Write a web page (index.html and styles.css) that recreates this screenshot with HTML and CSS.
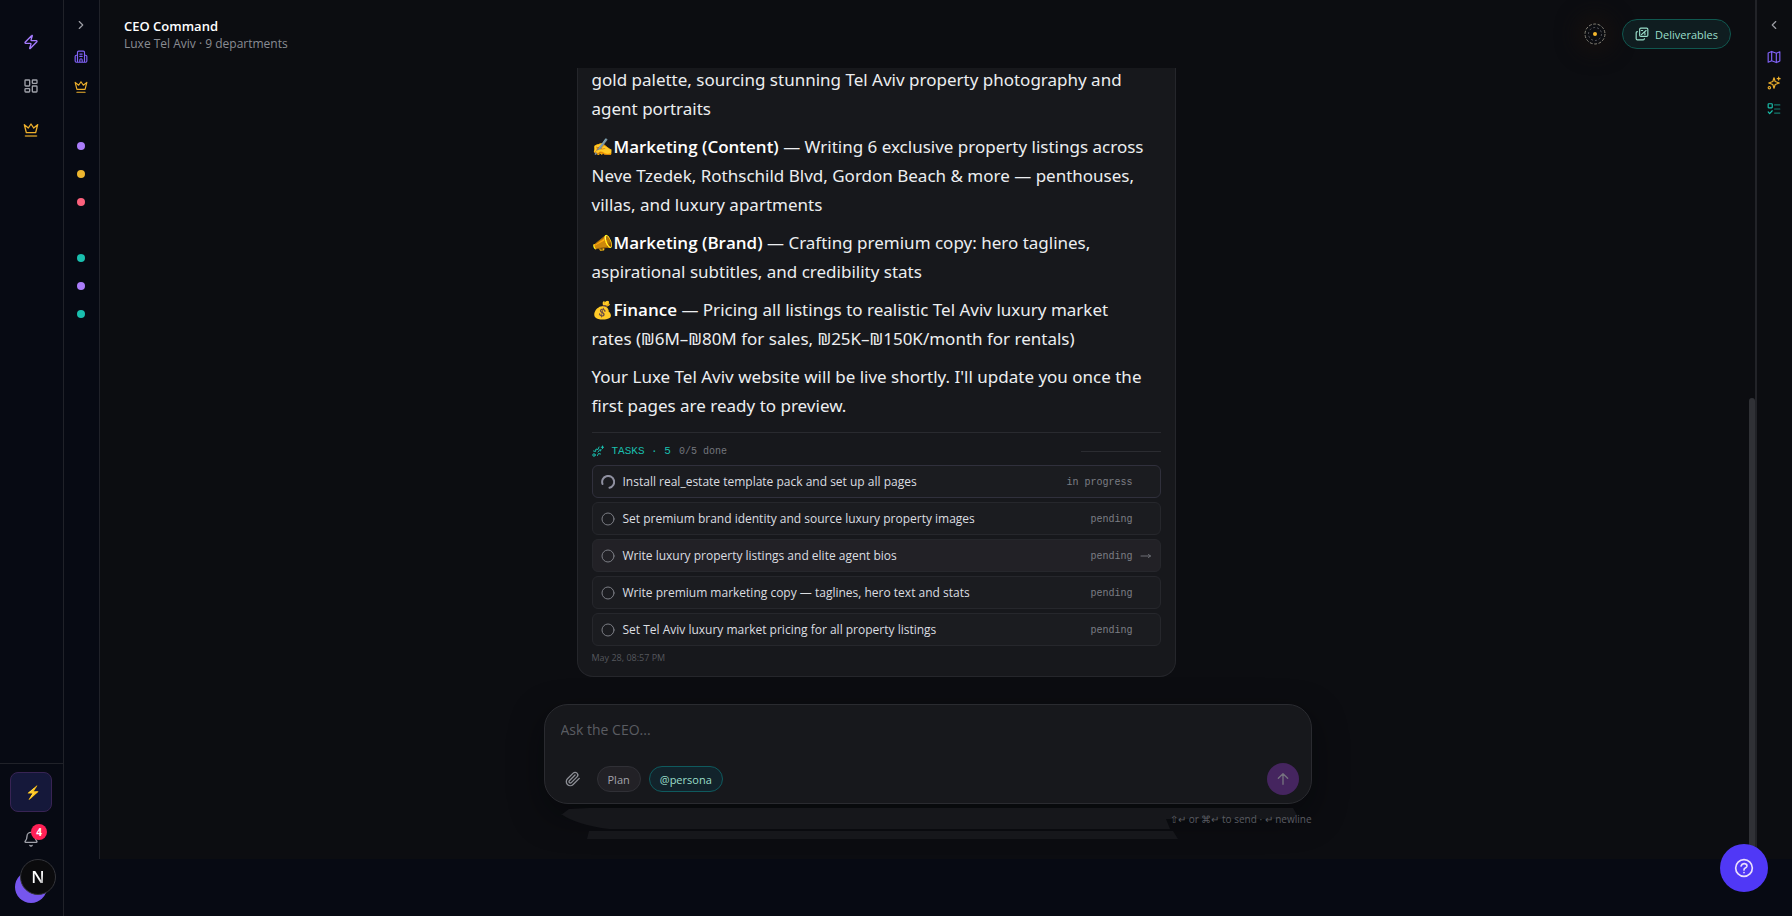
FILE: index.html
```html
<!DOCTYPE html>
<html lang="en">
<head>
<meta charset="utf-8">
<title>CEO Command</title>
<link rel="stylesheet" href="styles.css">
</head>
<body>
<div class="app">
  <nav class="rail" aria-label="Primary">
    <div class="rail-top">
      <a href="#" class="rail-link violet" aria-label="Home"><svg class="i16" viewBox="0 0 24 24"><path d="M4 14a1 1 0 0 1-.78-1.63l9.9-10.2a.5.5 0 0 1 .86.46l-1.92 6.02A1 1 0 0 0 13 10h7a1 1 0 0 1 .78 1.63l-9.9 10.2a.5.5 0 0 1-.86-.46l1.92-6.02A1 1 0 0 0 11 14z"/></svg></a>
      <a href="#" class="rail-link grey" aria-label="Dashboard"><svg class="i16" viewBox="0 0 24 24"><rect x="3" y="3" width="7" height="9" rx="1"/><rect x="14" y="3" width="7" height="5" rx="1"/><rect x="14" y="12" width="7" height="9" rx="1"/><rect x="3" y="16" width="7" height="5" rx="1"/></svg></a>
      <a href="#" class="rail-link gold" aria-label="CEO"><svg class="i16" viewBox="0 0 24 24"><path d="M2 4l3 12h14l3-12-6 5-4-6-4 6z"/><path class="dim" d="M4 21h16" stroke-width="3"/></svg></a>
    </div>
    <div class="rail-bottom">
      <button class="boost" aria-label="Boost">⚡</button>
      <button class="bell" aria-label="Notifications"><svg class="i16" viewBox="0 0 24 24"><path d="M10.3 21.5a2 2 0 0 0 3.4 0"/><path d="M3.3 15.3A1 1 0 0 0 4 17h16a1 1 0 0 0 .7-1.7C19.4 14 18 12.500 18 8A6 6 0 0 0 6 8c0 4.500-1.400 6-2.700 7.300"/></svg><span class="badge">4</span></button>
      <div class="account"><span class="avatar"></span><button class="dev" aria-label="Developer tools"><span>N</span></button></div>
    </div>
  </nav>

  <div class="work">
    <nav class="subrail" aria-label="Departments">
      <button class="sub-btn toggle" aria-label="Expand"><svg class="i14" viewBox="0 0 24 24"><path d="m9 18 6-6-6-6"/></svg></button>
      <a href="#" class="sub-btn indigo" aria-label="Company"><svg class="i14" viewBox="0 0 24 24"><path d="M6 21V4a2 2 0 0 1 2-2h8a2 2 0 0 1 2 2v17M6 9H4a2 2 0 0 0-2 2v8a2 2 0 0 0 2 2h16a2 2 0 0 0 2-2v-8a2 2 0 0 0-2-2h-2M10 21v-4a2 2 0 0 1 4 0v4M10 7h4M10 11h4"/></svg></a>
      <a href="#" class="sub-btn gold" aria-label="CEO"><svg class="i14" viewBox="0 0 24 24"><path d="M2 4l3 12h14l3-12-6 5-4-6-4 6z"/><path d="M5 21h14"/></svg></a>
      <ul class="dots">
        <li><a href="#" class="dot d-violet" aria-label="Department 1"></a></li>
        <li><a href="#" class="dot d-gold" aria-label="Department 2"></a></li>
        <li><a href="#" class="dot d-rose" aria-label="Department 3"></a></li>
        <li></li>
        <li><a href="#" class="dot d-teal" aria-label="Department 4"></a></li>
        <li><a href="#" class="dot d-violet" aria-label="Department 5"></a></li>
        <li><a href="#" class="dot d-teal" aria-label="Department 6"></a></li>
      </ul>
    </nav>

    <main class="main">
      <header class="head">
        <div>
          <h1>CEO Command</h1>
          <p class="sub">Luxe Tel Aviv · 9 departments</p>
        </div>
        <div class="head-actions">
          <svg class="orb" viewBox="0 0 22 22"><circle cx="11" cy="11" r="10" stroke="#8b8578" stroke-dasharray="3 1.500" stroke-linecap="butt"/><circle cx="11" cy="11" r="6.500" stroke="#54545c" stroke-dasharray="2 2" stroke-linecap="butt"/><circle cx="11" cy="11" r="2" fill="#f5b82e" stroke="none"/></svg>
          <button class="deliver"><svg class="i14" viewBox="0 0 24 24"><rect x="8" y="2" width="14" height="14" rx="2"/><path d="M4 8a2 2 0 0 0-2 2v10a2 2 0 0 0 2 2h10a2 2 0 0 0 2-2M11 13l8-7M11 6h2M17 13v-3"/></svg>Deliverables</button>
        </div>
      </header>

      <section class="chat">
        <article class="card">
          <div class="prose">
            <p>gold palette, sourcing stunning Tel Aviv property photography and<br>agent portraits</p>
            <p><span class="emo">✍️</span><strong>Marketing (Content)</strong> — Writing 6 exclusive property listings across<br>Neve Tzedek, Rothschild Blvd, Gordon Beach &amp; more — penthouses,<br>villas, and luxury apartments</p>
            <p><span class="emo tint">📣</span><strong>Marketing (Brand)</strong> — Crafting premium copy: hero taglines,<br>aspirational subtitles, and credibility stats</p>
            <p><span class="emo">💰</span><strong>Finance</strong> — Pricing all listings to realistic Tel Aviv luxury market<br>rates (₪6M–₪80M for sales, ₪25K–₪150K/month for rentals)</p>
            <p>Your Luxe Tel Aviv website will be live shortly. I'll update you once the<br>first pages are ready to preview.</p>
          </div>
          <div class="tasks">
            <div class="tasks-head">
              <svg class="i12" viewBox="0 0 24 24"><circle cx="4" cy="20" r="2.500"/><path d="M3 12l4 1 1-5 4 1 2-5M11 21l2-4 4 1M12 14l4-5M17 12l1-3M21 2v5M18.500 4.500h5"/></svg>
              <span class="t-title">TASKS · 5</span><span class="t-count">0/5 done</span><span class="t-line"></span>
            </div>
            <ul class="rows">
              <li><button class="row active"><svg class="ring" viewBox="0 0 14 14"><path d="M1.500 9A6 6 0 1 1 8.500 12.800" stroke-width="2"/></svg><span class="name">Install real_estate template pack and set up all pages</span><span class="state">in progress</span><span class="go"></span></button></li>
              <li><button class="row"><svg class="ring" viewBox="0 0 14 14"><circle cx="7" cy="7" r="6"/></svg><span class="name">Set premium brand identity and source luxury property images</span><span class="state">pending</span><span class="go"></span></button></li>
              <li><button class="row hover"><svg class="ring" viewBox="0 0 14 14"><circle cx="7" cy="7" r="6"/></svg><span class="name">Write luxury property listings and elite agent bios</span><span class="state">pending</span><span class="go"><svg class="i12" viewBox="0 0 24 24"><path d="M2 12h19M17 9l4 3-4 3"/></svg></span></button></li>
              <li><button class="row"><svg class="ring" viewBox="0 0 14 14"><circle cx="7" cy="7" r="6"/></svg><span class="name">Write premium marketing copy — taglines, hero text and stats</span><span class="state">pending</span><span class="go"></span></button></li>
              <li><button class="row"><svg class="ring" viewBox="0 0 14 14"><circle cx="7" cy="7" r="6"/></svg><span class="name">Set Tel Aviv luxury market pricing for all property listings</span><span class="state">pending</span><span class="go"></span></button></li>
            </ul>
          </div>
          <time class="stamp">May 28, 08:57 PM</time>
        </article>
      </section>

      <div class="dock">
        <form class="composer">
          <textarea rows="1" aria-label="Message" placeholder="Ask the CEO..."></textarea>
          <div class="tools">
            <button type="button" class="clip" aria-label="Attach"><svg class="i16" viewBox="0 0 24 24"><path d="m21.400 11.050-9.190 9.190a6 6 0 0 1-8.490-8.490l8.570-8.570A4 4 0 1 1 18 8.840l-8.590 8.570a2 2 0 0 1-2.830-2.830l8.490-8.480"/></svg></button>
            <button type="button" class="pill">Plan</button>
            <button type="button" class="pill teal">@persona</button>
            <button type="submit" class="send" aria-label="Send"><svg class="i16" viewBox="0 0 24 24"><path d="M12 20V4M5 11l7-7 7 7"/></svg></button>
          </div>
        </form>
        <svg class="ghost" viewBox="0 0 768 40" preserveAspectRatio="none"><path d="M17 11l8-6 20-1h704l4 7-4 4H622l4 10H65q-32-4-48-15zM45 27h584l5 8H43z"/></svg>
        <p class="hint">⇧↵ or ⌘↵ to send · ↵ newline</p>
      </div>
      <span class="scroll"></span>
    </main>

    <aside class="tray" aria-label="Panels">
      <button class="tray-btn toggle" aria-label="Collapse"><svg class="i14" viewBox="0 0 24 24"><path d="m15 18-6-6 6-6"/></svg></button>
      <button class="tray-btn indigo" aria-label="Map"><svg class="i14" viewBox="0 0 24 24"><path d="M2 5l6-2.500 8 3 6-2.500v16l-6 2.500-8-3-6 2.500zM8 2.500v16M16 5.500v16"/></svg></button>
      <button class="tray-btn gold" aria-label="Ideas"><svg class="i14" viewBox="0 0 24 24"><path d="M12 3l2 6.500 7 2.500-7 2.500L12 21l-2-6.500L3 12l7-2.500zM20 2v5M17.500 4.500h5"/><circle cx="4" cy="20" r="2"/></svg></button>
      <button class="tray-btn green" aria-label="Tasks"><svg class="i14" viewBox="0 0 24 24"><rect x="2" y="3" width="7" height="7" rx="1"/><path d="m2 17 2.500 3L9 15"/><path class="dim" d="M13 5h9M13 12h9M13 19h9"/></svg></button>
    </aside>
  </div>
  <button class="help" aria-label="Help"><svg viewBox="0 0 24 24"><circle cx="12" cy="12" r="10"/><path d="M8.500 9.500q1-3 4-2.700 3.300.4 3 3-.3 1.500-2 2.200-1.500.6-1.500 2.500M12 17.500v.2"/></svg></button>
</div>
</body>
</html>
```
FILE: styles.css
```css
* { box-sizing: border-box; }
body { margin: 0; background: #070a13; color: #e9eaee; font-family: "Open Sans", "Noto Sans", sans-serif; }
h1, p, ul { margin: 0; padding: 0; }
ul { list-style: none; }
button { font: inherit; color: inherit; background: none; border: 0; padding: 0; cursor: pointer; }
svg { fill: none; stroke: currentColor; stroke-width: 2; stroke-linecap: round; stroke-linejoin: round; flex: none; }
.i16 { width: 16px; height: 16px; }
.i14 { width: 14px; height: 14px; }
.i12 { width: 12px; height: 12px; }
.dim { opacity: 0.6; }
.violet { color: #a67cff; }
.grey { color: #a0a2aa; }
.gold { color: #eeb02c; }
.indigo { color: #8062f6; }
.green { color: #19c0ac; }

.app { display: flex; height: 100vh; min-height: 700px; position: relative; overflow: hidden; }
.rail { width: 64px; flex: none; display: flex; flex-direction: column; justify-content: space-between; border-right: 1px solid #202229; }
.rail-top { display: flex; flex-direction: column; align-items: center; gap: 4px; padding: 22px 1px 0 0; }
.rail-link { width: 40px; height: 40px; display: flex; align-items: center; justify-content: center; }
.rail-bottom { display: flex; flex-direction: column; align-items: center; border-top: 1px solid #202229; padding: 8px 1px 13px 0; }
.boost { width: 42px; height: 40px; border: 1px solid #382454; border-radius: 8px; background: #15183a; font-size: 13px; padding-left: 4px; }
.bell { position: relative; width: 32px; height: 32px; margin: 11px 0 16px; color: #a0a2aa; display: flex; align-items: center; justify-content: center; }
.badge { position: absolute; top: 1px; right: 0; width: 16px; height: 16px; border-radius: 50%; background: #ff2056; color: #fff; font-size: 10px; line-height: 16px; font-weight: 700; }
.account { position: relative; width: 32px; height: 32px; }
.avatar { display: block; width: 32px; height: 32px; border-radius: 50%; background: #7656ee; }
.dev { position: absolute; left: 5px; top: -12px; width: 36px; height: 36px; border-radius: 50%; border: 1px solid #34353a; background: #0b0b0d; }
.dev span { font-size: 17px; line-height: 32px; font-weight: 600; background: linear-gradient(to bottom right, #fff 60%, #555); background-clip: text; color: transparent; }

.work { flex: 1; min-width: 0; display: flex; height: calc(100% - 57px); background: #0c0d11; }
.subrail { width: 36px; flex: none; background: #070a13; border-right: 1px solid #202229; display: flex; flex-direction: column; align-items: center; padding: 11px 1px 0 0; }
.sub-btn { width: 28px; height: 28px; display: flex; align-items: center; justify-content: center; margin-bottom: 2px; }
.toggle { color: #9c9da4; margin-bottom: 4px; }
.dots { padding-top: 29px; }
.dots li { height: 28px; display: flex; align-items: center; }
.dot { display: block; width: 8px; height: 8px; border-radius: 50%; }
.d-violet { background: #ab7dfa; }
.d-gold { background: #edb62f; }
.d-rose { background: #fb617c; }
.d-teal { background: #19bfae; }

.main { flex: 1; min-width: 0; position: relative; display: flex; flex-direction: column; align-items: center; overflow: hidden; }
.head { width: 100%; height: 68px; flex: none; display: flex; justify-content: space-between; align-items: center; padding: 0 24px; }
h1 { font-size: 13px; line-height: 18px; font-weight: 600; color: #fff; }
.sub { font-size: 12px; line-height: 17px; color: #8a8c93; }
.head-actions { display: flex; align-items: center; gap: 16px; }
.orb { width: 22px; height: 22px; stroke-width: 1; border-radius: 50%; box-shadow: 0 0 20px 8px #15100f; }
.deliver { height: 30px; display: flex; align-items: center; gap: 6px; padding: 0 12px; border: 1px solid #10574f; border-radius: 15px; background: #0f1d20; color: #9adfca; font-size: 11px; font-weight: 500; }

.chat { flex: 1; min-height: 0; width: calc(100% - 48px); max-width: 768px; padding-left: 33px; display: flex; overflow: hidden; }
.card { width: 599px; max-width: 100%; display: flex; flex-direction: column; justify-content: flex-end; padding: 0 14px 10px; background: #17181c; border: 1px solid #25262b; border-top: 0; border-radius: 0 0 16px 16px; }
.prose { display: flex; flex-direction: column; gap: 9px; font-family: "Noto Sans", "Open Sans", sans-serif; font-size: 17px; line-height: 29px; color: #eceef0; }
.prose p { white-space: nowrap; }
.prose strong { font-family: "Open Sans", sans-serif; font-weight: 600; color: #fff; }
.emo { display: inline-block; width: 22px; line-height: 20px; }
.tint { filter: sepia(1) saturate(4); }
.tasks { margin-top: 12px; padding-top: 10px; border-top: 1px solid #292a2f; }
.tasks-head { display: flex; align-items: center; height: 16px; margin-bottom: 6px; color: #19bfae; font-family: "Liberation Mono", monospace; }
.t-title { font-size: 11px; margin-left: 8px; white-space: pre; }
.t-count { font-size: 10px; margin-left: 8px; color: #74767c; }
.t-line { width: 80px; height: 1px; background: #2b2c31; margin-left: auto; }
.rows { display: flex; flex-direction: column; gap: 4px; }
.rows li { display: flex; }
.row { width: 100%; height: 33px; display: flex; align-items: center; padding: 0 8px; border: 1px solid #26272c; border-radius: 6px; background: #1b1c20; text-align: left; }
.row.active { border-color: #30303c; }
.row.hover { background: #222126; }
.ring { width: 14px; height: 14px; stroke-width: 1; color: #7b7d84; }
.active .ring { color: #8f90a0; }
.name { flex: 1; margin-left: 8px; font-size: 12px; color: #dcdee1; }
.state { font-family: "Liberation Mono", monospace; font-size: 10px; line-height: 14px; padding-top: 2px; color: #7c7e84; }
.go { width: 19px; color: #6c6e74; display: flex; justify-content: flex-end; }
.stamp { font-size: 9px; line-height: 16px; margin-top: 4px; color: #55575d; }

.dock { position: relative; width: calc(100% - 48px); max-width: 768px; margin: 27px 0 33px; flex: none; }
.composer { position: relative; z-index: 1; height: 100px; border: 1px solid #2a2b30; border-radius: 24px; background: #17181c; box-shadow: 0 12px 32px rgba(4, 5, 8, 0.5); display: flex; flex-direction: column; justify-content: space-between; padding: 13px 12px 8px 16px; }
textarea { width: 100%; height: 24px; border: 0; padding: 0; outline: 0; resize: none; background: none; color: #e9eaee; font: 14px/24px "Open Sans", "Noto Sans", sans-serif; }
textarea::placeholder { color: #5a5c62; opacity: 1; }
.tools { display: flex; align-items: center; }
.clip { width: 24px; height: 32px; display: flex; align-items: center; justify-content: center; color: #8d8f96; margin-right: 12px; }
.pill { height: 26px; padding: 0 10px; border: 1px solid #303036; border-radius: 13px; background: #222126; color: #a2a4ab; font-size: 11px; font-weight: 500; margin-right: 8px; }
.pill.teal { border-color: #0f5a5e; background: #12232b; color: #9adfca; }
.send { width: 32px; height: 32px; border-radius: 50%; background: #45255f; color: #75727f; margin-left: auto; display: flex; align-items: center; justify-content: center; }
.ghost { position: absolute; z-index: 1; left: 0; top: 100px; width: 100%; height: 40px; stroke: none; fill: #16171b; }
.hint { position: relative; z-index: 2; height: 22px; padding-top: 7px; text-align: right; font-size: 10px; line-height: 16px; color: #5a5c62; }
.scroll { position: absolute; right: 0; top: 398px; bottom: 8px; width: 6px; border-radius: 3px; background: #303136; }

.tray { width: 37px; flex: none; border-left: 2px solid #222328; display: flex; flex-direction: column; align-items: center; padding: 12px 1px 0 0; }
.tray-btn { width: 26px; height: 26px; display: flex; align-items: center; justify-content: center; }
.tray-btn.toggle { margin-bottom: 6px; }
.help { position: absolute; right: 24px; bottom: 24px; width: 48px; height: 48px; border-radius: 50%; background: #5038f6; color: #eadffc; display: flex; align-items: center; justify-content: center; }
.help svg { width: 20px; height: 20px; }
```
